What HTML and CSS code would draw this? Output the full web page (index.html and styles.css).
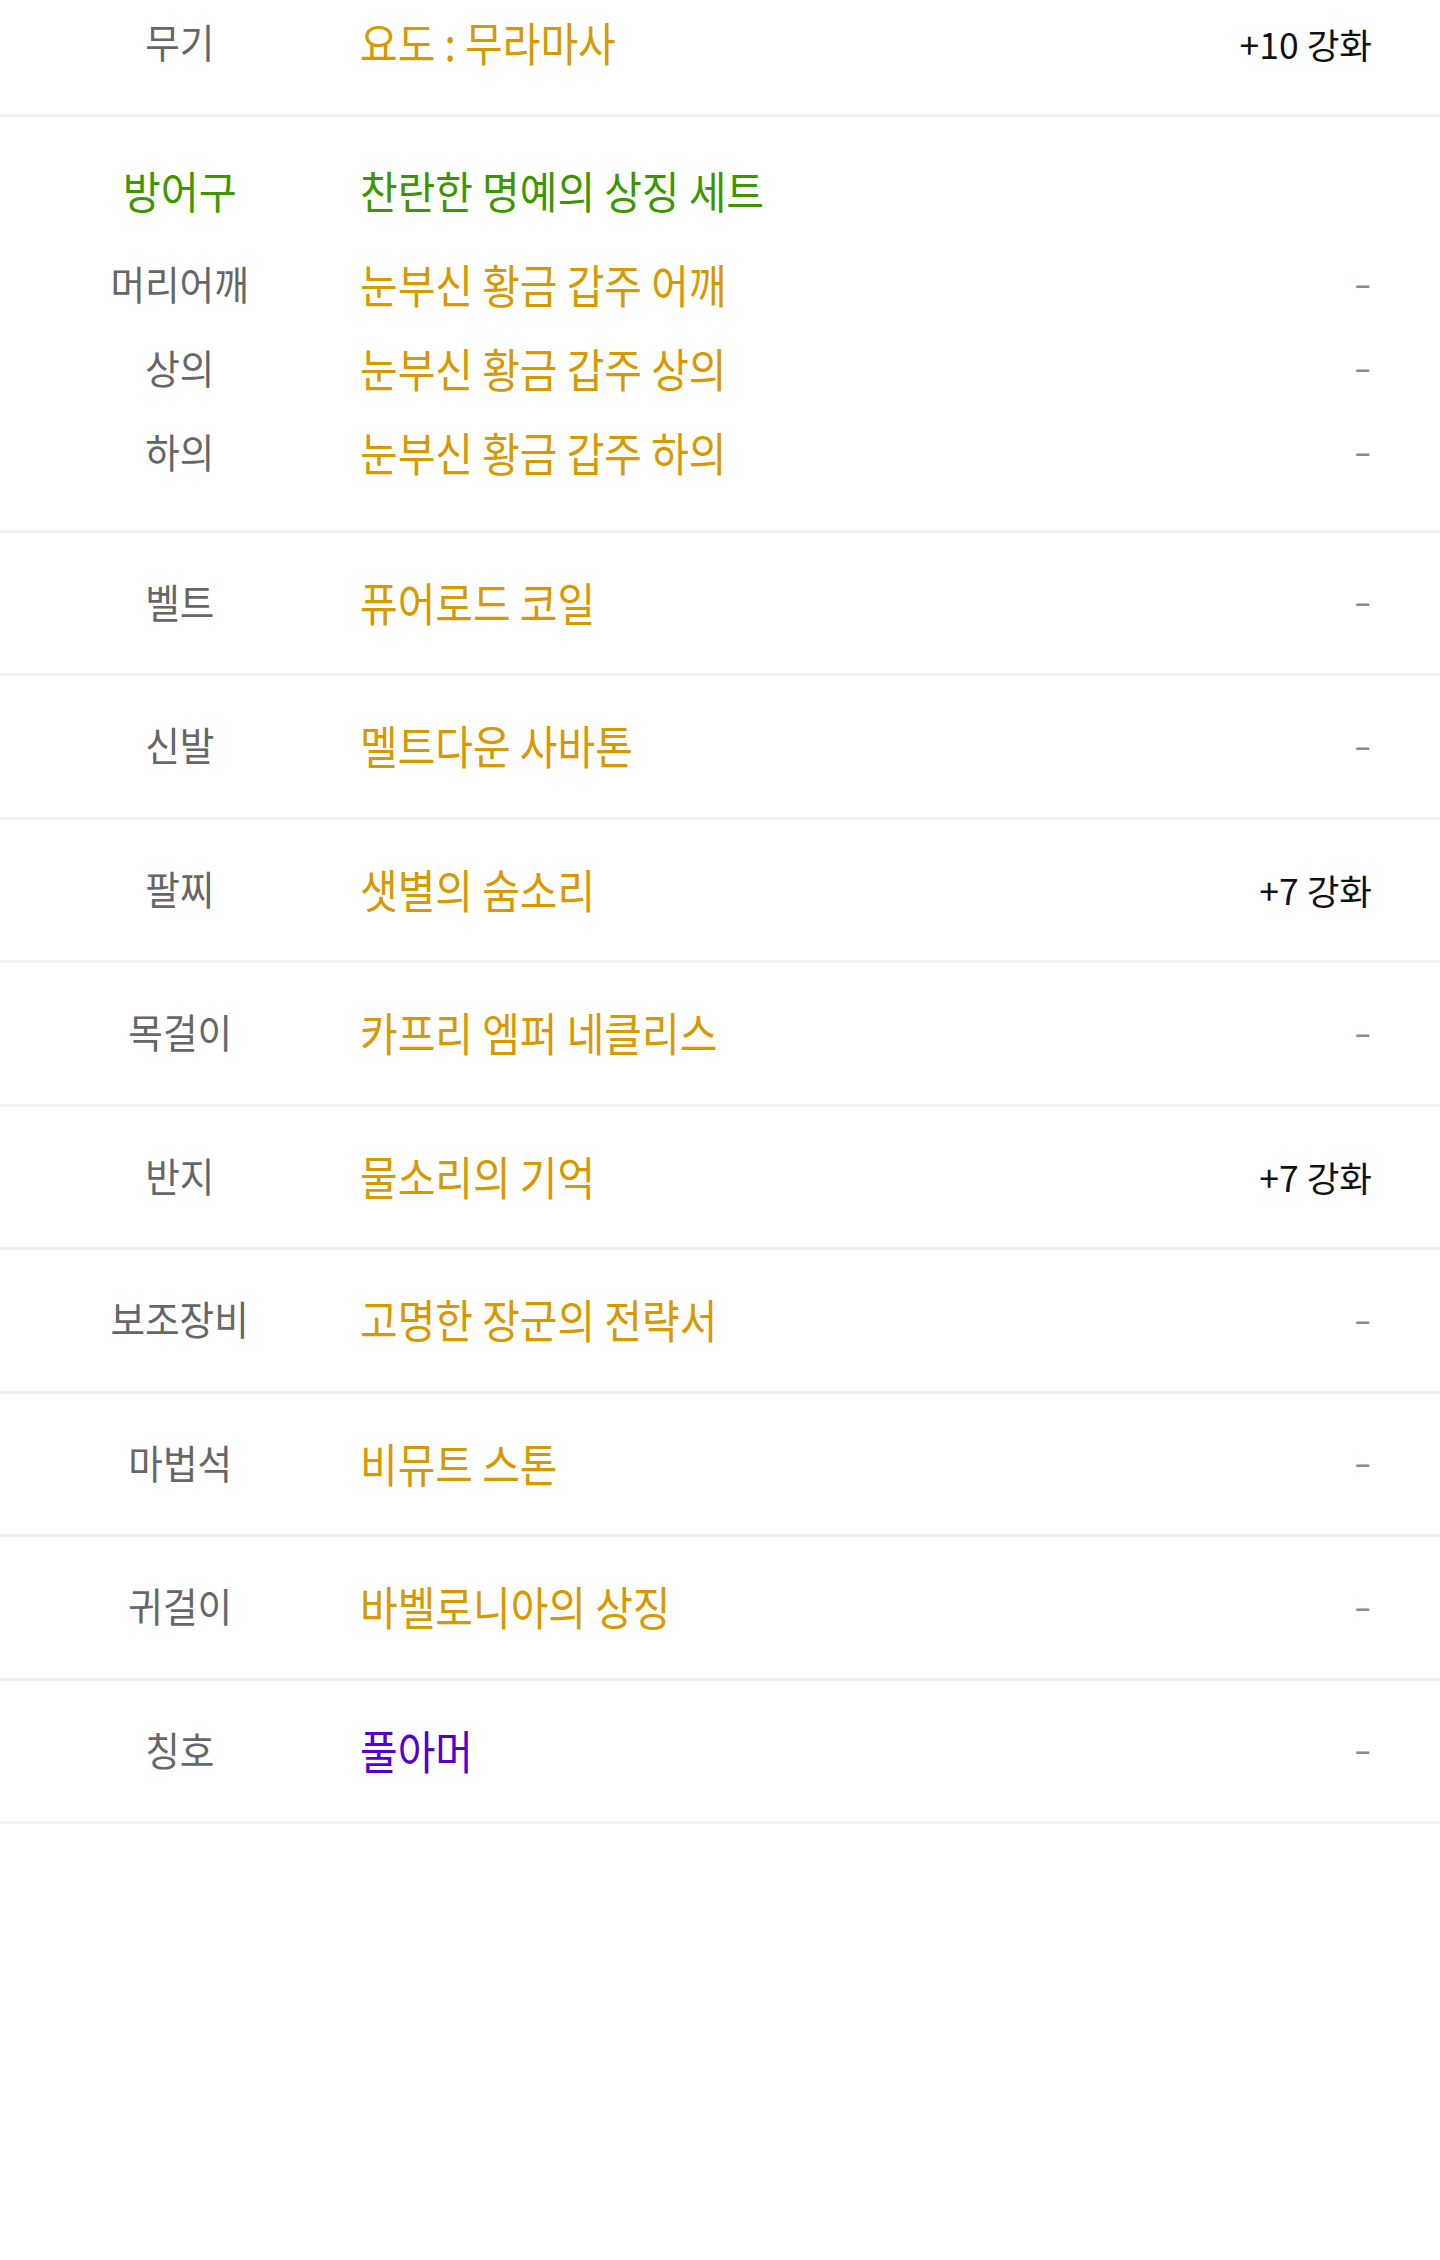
FILE: index.html
```html
<html>
    <head>
        <title>장비</title>
        <link rel="stylesheet" href="styles.css">
    </head>
    <body>
        <div class="gear">
            <div class="row">
                <div class="label"><span>무기</span></div>
                <div class="name"><span>요도 : 무라마사</span></div>
                <div class="value">+10 강화</div>
            </div>

            <div class="group">
                <div class="row head">
                    <div class="label"><span>방어구</span></div>
                    <div class="name"><span>찬란한 명예의 상징 세트</span></div>
                    <div class="value"></div>
                </div>
                <div class="row">
                    <div class="label"><span>머리어깨</span></div>
                    <div class="name"><span>눈부신 황금 갑주 어깨</span></div>
                    <div class="value dash">–</div>
                </div>
                <div class="row">
                    <div class="label"><span>상의</span></div>
                    <div class="name"><span>눈부신 황금 갑주 상의</span></div>
                    <div class="value dash">–</div>
                </div>
                <div class="row">
                    <div class="label"><span>하의</span></div>
                    <div class="name"><span>눈부신 황금 갑주 하의</span></div>
                    <div class="value dash">–</div>
                </div>
            </div>

            <div class="row">
                <div class="label"><span>벨트</span></div>
                <div class="name"><span>퓨어로드 코일</span></div>
                <div class="value dash">–</div>
            </div>
            <div class="row">
                <div class="label"><span>신발</span></div>
                <div class="name"><span>멜트다운 사바톤</span></div>
                <div class="value dash">–</div>
            </div>
            <div class="row">
                <div class="label"><span>팔찌</span></div>
                <div class="name"><span>샛별의 숨소리</span></div>
                <div class="value">+7 강화</div>
            </div>
            <div class="row">
                <div class="label"><span>목걸이</span></div>
                <div class="name"><span>카프리 엠퍼 네클리스</span></div>
                <div class="value dash">–</div>
            </div>
            <div class="row">
                <div class="label"><span>반지</span></div>
                <div class="name"><span>물소리의 기억</span></div>
                <div class="value">+7 강화</div>
            </div>
            <div class="row">
                <div class="label"><span>보조장비</span></div>
                <div class="name"><span>고명한 장군의 전략서</span></div>
                <div class="value dash">–</div>
            </div>
            <div class="row">
                <div class="label"><span>마법석</span></div>
                <div class="name"><span>비뮤트 스톤</span></div>
                <div class="value dash">–</div>
            </div>
            <div class="row">
                <div class="label"><span>귀걸이</span></div>
                <div class="name"><span>바벨로니아의 상징</span></div>
                <div class="value dash">–</div>
            </div>
            <div class="row">
                <div class="label"><span>칭호</span></div>
                <div class="name title"><span>풀아머</span></div>
                <div class="value dash">–</div>
            </div>
        </div>
    </body>
</html>
```

FILE: styles.css
```css
body{
    margin: 0;
    background: #fff;
    font-family: "Noto Sans CJK KR", sans-serif;
}
.gear{
    margin-top: -27px;
}
.row{
    display: grid;
    grid-template-columns: 360px 1fr auto;
    align-items: center;
    height: 140.5px;
    padding-right: 68px;
    border-bottom: 3px solid #f0f0f0;
}
.group{
    padding: 32px 0 35px;
    border-bottom: 3px solid #f0f0f0;
}
.group .row{
    height: 84px;
    border: none;
}
.group .head{
    margin-bottom: 10px;
}
.label{
    text-align: center;
    color: #666;
}
.label span{
    display: inline-block;
    font-size: 40px;
    line-height: 1;
    transform: translateY(-2px) scaleX(0.94);
}
.name span{
    display: inline-block;
    font-size: 46px;
    line-height: 1;
    white-space: nowrap;
    color: #d89800;
    transform: translateY(-2px) scaleX(0.89);
    transform-origin: left center;
}
.head .label span{
    font-size: 44px;
    color: #3c9600;
    transform: translateY(-1px) scaleX(0.94);
}
.head .name span{
    font-size: 44px;
    color: #3c9600;
    transform: translateY(-1px) scaleX(0.93);
}
.title span{
    color: #5500cc;
}
.value{
    font-size: 35.5px;
    color: #111;
    text-align: right;
}
.dash{
    padding: 2px 2px 0 0;
    font-family: "Liberation Sans", sans-serif;
    font-size: 26px;
    font-weight: bold;
    color: #8a8a8a;
}
```
